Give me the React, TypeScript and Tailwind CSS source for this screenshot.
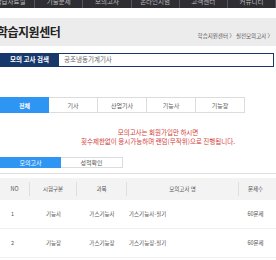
const FONT = { fontFamily: '"Noto Sans CJK KR", "Noto Sans", sans-serif' };

const NAV = ['학습자료실', '기출문제', '모의고사', '온라인시험', '고객센터', '커뮤니티'];
const TABS = ['전체', '기사', '산업기사', '기능사', '기능장'];
const ROWS = [
  { no: 1, kind: '기능사', subject: '가스기능사', name: '가스기능사-필기', count: '60문제' },
  { no: 2, kind: '기능장', subject: '가스기능장', name: '가스기능장-필기', count: '60문제' },
];

export default function App() {
  return (
    <div className="w-[276px] h-[260px] overflow-hidden bg-white text-[#444]" style={FONT}>
      {/* top menu, mostly cropped by the window */}
      <div className="h-[8px] bg-[#2e2e33] overflow-hidden">
        <div className="flex ml-[-13px]">
          {NAV.map((n) => (
            <div
              key={n}
              className="w-[55px] h-[8px] border-r border-[#55555c] flex justify-center text-[6.5px] leading-none text-[#bdbdbd]"
            >
              <span className="mt-[-2px]">{n}</span>
            </div>
          ))}
        </div>
      </div>

      <div className="h-[10px]" />

      {/* page title band */}
      <div className="h-[28px] bg-[#ececec] flex items-center justify-between">
        <div className="ml-[-3px] text-[12px] font-bold text-[#222] leading-none tracking-[-0.5px]">학습지원센터</div>
        <div className="self-end mb-[7px] mr-[3px] text-[5.5px] leading-none text-[#555]">
          학습지원센터 〉 실전모의고사 〉
        </div>
      </div>

      {/* search */}
      <div className="mt-[7px] h-[14px] flex">
        <div className="w-[59px] bg-[#17386b] text-white text-[6.5px] font-bold flex items-center justify-center">
          모의 고사 검색
        </div>
        <div className="flex-1 mr-[2px] border-y border-r border-[#17386b] flex items-center pl-[5px] text-[6.5px] text-[#666]">
          공조냉동기계기사
        </div>
      </div>

      {/* category tabs */}
      <div className="mt-[30px] flex h-[16px]">
        {TABS.map((t, i) => (
          <div
            key={t}
            className={`w-[49px] flex items-center justify-center text-[6px] ${
              i === 0
                ? 'bg-[#2f95f2] text-white font-bold'
                : 'border-y border-r border-[#dcdcdc] text-[#555]'
            }`}
          >
            {t}
          </div>
        ))}
      </div>

      {/* notice */}
      <div className="mt-[15px] text-center text-[6.5px] leading-[9px] text-[#d2403a] pl-[40px]">
        <div>모의고사는 회원가입만 하시면</div>
        <div>횟수제한없이 응시가능하며 랜덤(무작위)으로 진행됩니다.</div>
      </div>

      {/* sub tabs */}
      <div className="mt-[11px] flex h-[11px]">
        <div className="w-[61px] bg-[#2f95f2] text-white text-[6px] flex items-center justify-center">모의고사</div>
        <div className="w-[62px] border-y border-r border-[#dcdcdc] text-[6px] flex items-center justify-center text-[#555]">
          성적확인
        </div>
      </div>

      <div className="mt-[5px] h-[1px] bg-[#dedede]" />

      {/* table */}
      <div className="mt-[4px] text-[5.5px] text-[#555]">
        <div className="h-[22px] bg-[#f3f3f3] flex items-center">
          <div className="w-[30px] text-center border-r border-[#dedede] py-[3px]">NO</div>
          <div className="w-[47px] text-center border-r border-[#dedede] py-[3px]">시험구분</div>
          <div className="w-[50px] text-center border-r border-[#dedede] py-[3px]">과목</div>
          <div className="w-[112px] text-center border-r border-[#dedede] py-[3px]">모의고사 명</div>
          <div className="flex-1 text-center py-[3px] pr-[4px]">문제수</div>
        </div>
        {ROWS.map((r) => (
          <div key={r.no} className="h-[29px] flex items-center border-b border-[#f0f0f0]">
            <div className="w-[30px] pl-[11px]">{r.no}</div>
            <div className="w-[47px] text-center">{r.kind}</div>
            <div className="w-[50px] text-center">{r.subject}</div>
            <div className="w-[112px] pl-[2px]">{r.name}</div>
            <div className="flex-1 text-center pr-[4px]">{r.count}</div>
          </div>
        ))}
      </div>
    </div>
  );
}
